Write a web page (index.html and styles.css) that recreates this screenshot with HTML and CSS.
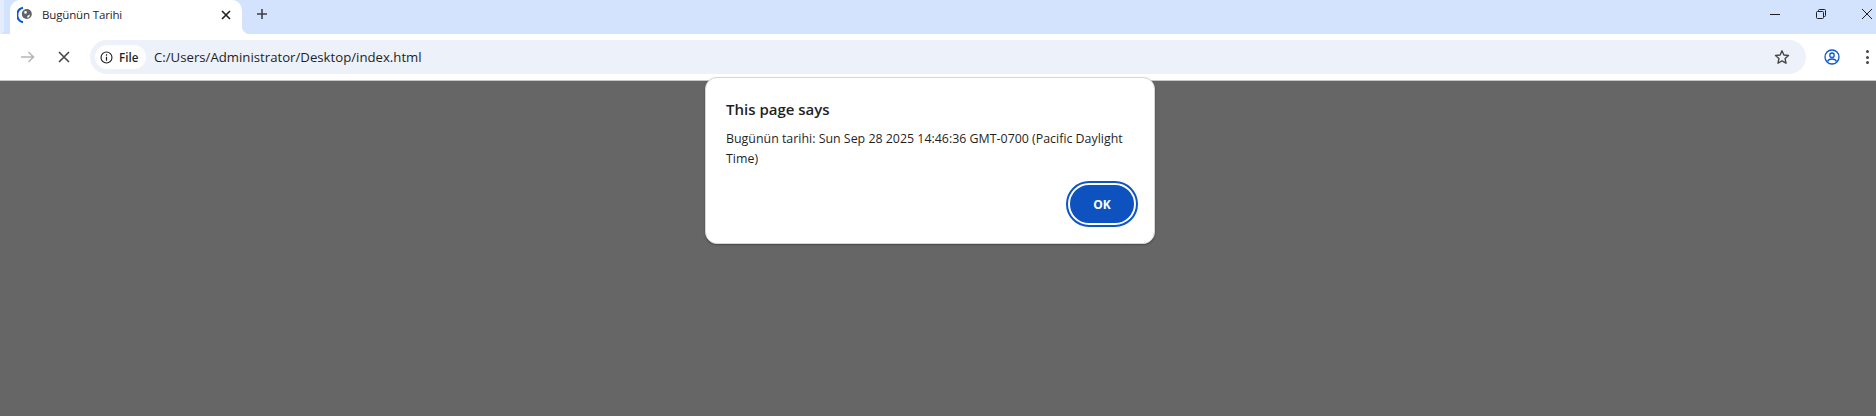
FILE: index.html
```html
<!DOCTYPE html>
<html lang="en">
<head>
    <meta charset="UTF-8">
    <meta name="viewport" content="width=device-width, initial-scale=1.0">
    <title>Bugünün Tarihi</title>
    <link rel="stylesheet" href="styles.css">
</head>
<body>
    <div class="tabstrip">
        <div class="tab-edge"></div>
        <div class="tab">
            <svg class="favicon" width="18" height="18" viewBox="0 0 18 18">
                <path d="M6 1.8 A7.4 7.4 0 0 0 6 16.2" fill="none" stroke="#0b57d0" stroke-width="2"/>
                <circle cx="9.8" cy="8" r="5" fill="#5f6368"/>
                <path d="M7.6 4.8 L10.2 5.8 L9.2 7.8 L7.2 7.4 Z M10.2 10 L12.9 8.5 L12.4 10.8 L10.6 12 Z" fill="#fff"/>
            </svg>
            <span class="tab-title">Bugünün Tarihi</span>
            <svg class="tab-close" width="12" height="12" viewBox="0 0 12 12">
                <path d="M2 2 L10 10 M10 2 L2 10" stroke="#1f1f1f" stroke-width="1.6" fill="none"/>
            </svg>
        </div>
        <div class="tab-new">
            <svg width="14" height="14" viewBox="0 0 14 14">
                <path d="M7 2 V12 M2 7 H12" stroke="#3c4043" stroke-width="1.6" fill="none"/>
            </svg>
        </div>
        <div class="window-controls">
            <svg width="12" height="12" viewBox="0 0 12 12"><path d="M1 6.5 H11" stroke="#1f1f1f" stroke-width="1"/></svg>
            <svg width="12" height="12" viewBox="0 0 12 12">
                <rect x="1.5" y="3.5" width="7" height="7" rx="1" fill="none" stroke="#1f1f1f"/>
                <path d="M3.5 3.5 V2.5 Q3.5 1.5 4.5 1.5 H9.5 Q10.5 1.5 10.5 2.5 V7.5 Q10.5 8.5 9.5 8.5 H8.5" fill="none" stroke="#1f1f1f"/>
            </svg>
            <svg width="12" height="12" viewBox="0 0 12 12"><path d="M1 1 L11 11 M11 1 L1 11" stroke="#1f1f1f" stroke-width="1"/></svg>
        </div>
    </div>

    <div class="toolbar">
        <svg class="nav-forward" width="16" height="16" viewBox="0 0 16 16">
            <path d="M2 8 H14.5 M9.5 3 L14.5 8 L9.5 13" fill="none" stroke="#b4b6b9" stroke-width="1.5"/>
        </svg>
        <svg class="nav-stop" width="12" height="12" viewBox="0 0 12 12">
            <path d="M1 1 L11 11 M11 1 L1 11" stroke="#474747" stroke-width="1.6" fill="none"/>
        </svg>
        <div class="omnibox">
            <div class="chip">
                <svg width="13" height="13" viewBox="0 0 14 14">
                    <circle cx="7" cy="7" r="5.9" fill="none" stroke="#1f1f1f" stroke-width="1.2"/>
                    <path d="M7 6.2 V10.4 M7 3.6 V5" stroke="#1f1f1f" stroke-width="1.3"/>
                </svg>
                <span>File</span>
            </div>
            <span class="url">C:/Users/Administrator/Desktop/index.html</span>
            <svg class="star" width="16" height="16" viewBox="0 0 16 16">
                <path d="M8 1.8 L9.9 6 L14.5 6.5 L11.1 9.6 L12 14.2 L8 11.9 L4 14.2 L4.9 9.6 L1.5 6.5 L6.1 6 Z" fill="none" stroke="#474747" stroke-width="1.4" stroke-linejoin="round"/>
            </svg>
        </div>
        <svg class="profile" width="16" height="16" viewBox="0 0 16 16">
            <circle cx="8" cy="8" r="7" fill="none" stroke="#0b57d0" stroke-width="1.3"/>
            <circle cx="8" cy="6.2" r="2.2" fill="none" stroke="#0b57d0" stroke-width="1.3"/>
            <path d="M3.6 12.4 Q4.6 10 8 10 Q11.4 10 12.4 12.4" fill="none" stroke="#0b57d0" stroke-width="1.3"/>
        </svg>
        <div class="menu-dots"><i></i><i></i><i></i></div>
    </div>

    <div class="page">
        <div class="dialog">
            <h2>This page says</h2>
            <p>Bugünün tarihi: Sun Sep 28 2025 14:46:36 GMT-0700 (Pacific Daylight Time)</p>
            <div class="dialog-actions">
                <button class="ok">OK</button>
            </div>
        </div>
    </div>
</body>
</html>
```

FILE: styles.css
```css
html, body {
    margin: 0;
    padding: 0;
    height: 416px;
    overflow: hidden;
}
body {
    font-family: "Open Sans", "Noto Sans", Arial, sans-serif;
    color: #1f1f1f;
    display: flex;
    flex-direction: column;
    background: #666;
}
.tabstrip {
    height: 34px;
    background: #d3e3fd;
    display: flex;
    align-items: stretch;
    flex-shrink: 0;
}
.tab-edge {
    width: 4px;
    margin-right: 6px;
    background: #e3edfd;
    border-bottom-right-radius: 6px;
}
.tab {
    width: 232px;
    box-sizing: border-box;
    background: #fff;
    border-radius: 10px 10px 0 0;
    display: flex;
    align-items: center;
    padding: 0 10px 5px 7px;
    position: relative;
}
.tab::after {
    content: "";
    position: absolute;
    left: 100%;
    bottom: 0;
    width: 8px;
    height: 8px;
    background: radial-gradient(circle at 100% 0, #d3e3fd 8px, #fff 8.5px);
}
.favicon {
    flex-shrink: 0;
}
.tab-title {
    font-size: 11.5px;
    letter-spacing: -0.15px;
    margin-left: 7px;
    flex: 1;
    white-space: nowrap;
}
.tab-new {
    margin-left: 13px;
    display: flex;
    align-items: center;
    padding-bottom: 6px;
}
.window-controls {
    margin-left: auto;
    display: flex;
    align-items: center;
    gap: 34px;
    padding: 0 3px 6px 0;
}
.toolbar {
    height: 46px;
    background: #fff;
    border-bottom: 1px solid #c7c7c7;
    display: flex;
    align-items: center;
    flex-shrink: 0;
}
.nav-forward {
    margin-left: 19px;
}
.nav-stop {
    margin-left: 23px;
}
.omnibox {
    margin-left: 20px;
    width: 1716px;
    height: 34px;
    background: #ecf1fa;
    border-radius: 17px;
    display: flex;
    align-items: center;
    padding: 0 16px 0 5px;
    box-sizing: border-box;
}
.chip {
    width: 51px;
    height: 24px;
    box-sizing: border-box;
    background: #fff;
    border-radius: 12px;
    display: flex;
    align-items: center;
    gap: 6px;
    padding-left: 5px;
    font-size: 11.6px;
    font-weight: 600;
}
.url {
    font-size: 13.2px;
    margin-left: 8px;
    flex: 1;
    white-space: nowrap;
}
.profile {
    margin-left: 18px;
}
.menu-dots {
    margin-left: 26px;
    display: flex;
    flex-direction: column;
    gap: 2.5px;
}
.menu-dots i {
    display: block;
    width: 3px;
    height: 3px;
    border-radius: 50%;
    background: #474747;
}
.page {
    flex: 1;
    background: #666;
    position: relative;
}
.dialog {
    position: absolute;
    left: 705px;
    top: -4px;
    width: 450px;
    height: 167px;
    box-sizing: border-box;
    background: #fff;
    border-radius: 12px;
    border: 1px solid #d6d6d6;
    box-shadow: 0 1px 2px rgba(0, 0, 0, 0.3);
    padding: 20px 20px 0;
}
.dialog h2 {
    margin: 0;
    font-size: 15px;
    font-weight: 600;
    line-height: 22px;
}
.dialog p {
    margin: 9px 0 0;
    font-size: 12.4px;
    line-height: 20px;
}
.dialog-actions {
    display: flex;
    justify-content: flex-end;
    margin-top: 14px;
    margin-right: -2px;
}
.ok {
    width: 68px;
    height: 42px;
    box-sizing: border-box;
    border-radius: 21px;
    border: 2px solid #fff;
    outline: 2px solid #0d55c4;
    background: #0d52bf;
    color: #fff;
    font-family: inherit;
    font-size: 12px;
    font-weight: 700;
    padding: 0;
}
```
